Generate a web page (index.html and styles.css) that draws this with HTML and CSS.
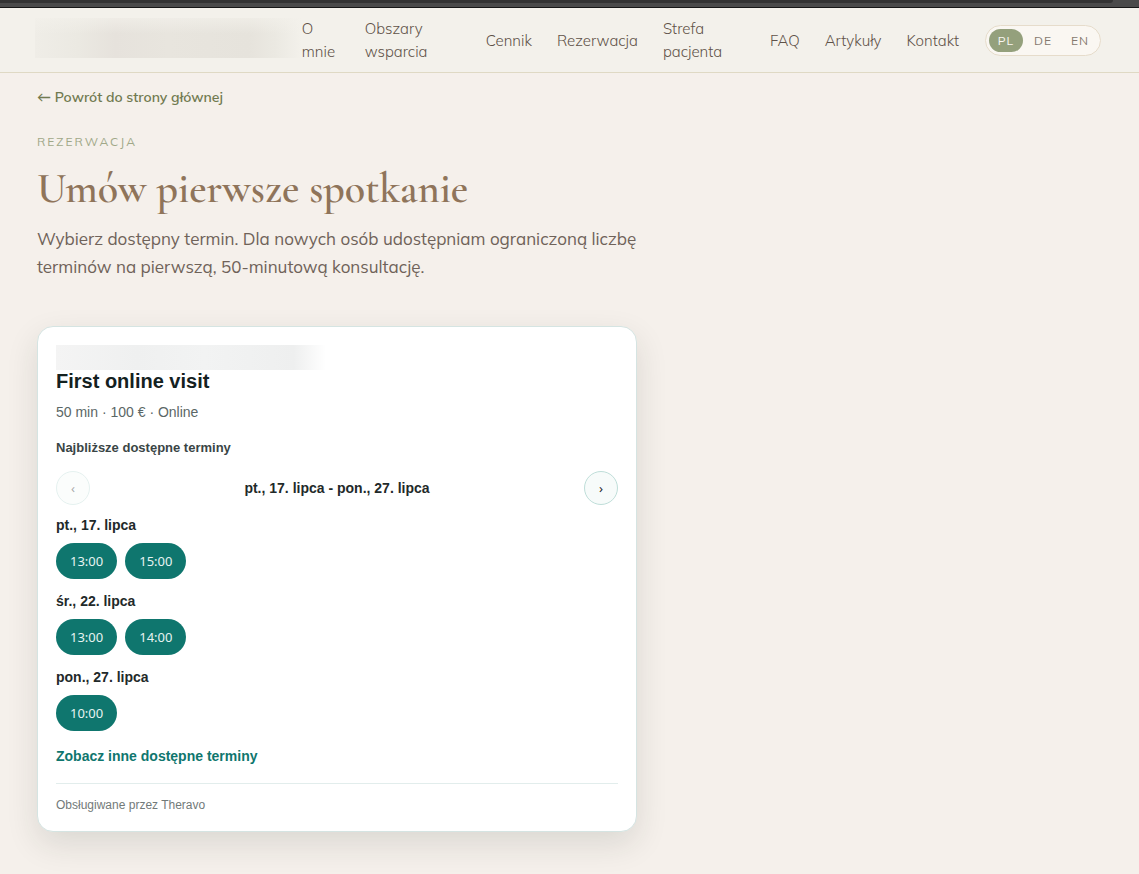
FILE: index.html
```html
<!DOCTYPE html>
<html lang="pl">
<head>
<meta charset="utf-8">
<meta name="viewport" content="width=device-width, initial-scale=1">
<title>Umów pierwsze spotkanie</title>
<link rel="stylesheet" href="styles.css">
</head>
<body>
<div class="window-edge"><div class="window-field"></div></div>
<header class="site-header">
  <div class="brand"><div class="brand-haze"></div></div>
  <nav class="nav">
    <a class="nav-about" href="#">O mnie</a>
    <a class="nav-areas" href="#">Obszary wsparcia</a>
    <a href="#">Cennik</a>
    <a href="#">Rezerwacja</a>
    <a class="nav-zone" href="#">Strefa pacjenta</a>
    <a href="#">FAQ</a>
    <a href="#">Artykuły</a>
    <a href="#">Kontakt</a>
  </nav>
  <div class="languages">
    <button class="language language-active" type="button">PL</button>
    <button class="language" type="button">DE</button>
    <button class="language" type="button">EN</button>
  </div>
</header>
<main class="page">
  <a class="back" href="#">← Powrót do strony głównej</a>
  <p class="eyebrow">Rezerwacja</p>
  <h1 class="title">Umów pierwsze spotkanie</h1>
  <p class="lead">Wybierz dostępny termin. Dla nowych osób udostępniam ograniczoną liczbę terminów na pierwszą, 50-minutową konsultację.</p>
  <section class="card">
    <div class="provider"></div>
    <h2 class="visit">First online visit</h2>
    <p class="meta">50 min · 100 € · Online</p>
    <p class="nearest">Najbliższe dostępne terminy</p>
    <div class="range">
      <button class="arrow" type="button" aria-label="Poprzednie terminy" disabled>‹</button>
      <strong class="range-label">pt., 17. lipca - pon., 27. lipca</strong>
      <button class="arrow" type="button" aria-label="Następne terminy">›</button>
    </div>
    <div class="days">
      <div class="day">
        <h3 class="date">pt., 17. lipca</h3>
        <div class="slots"><button class="slot" type="button">13:00</button><button class="slot" type="button">15:00</button></div>
      </div>
      <div class="day">
        <h3 class="date">śr., 22. lipca</h3>
        <div class="slots"><button class="slot" type="button">13:00</button><button class="slot" type="button">14:00</button></div>
      </div>
      <div class="day">
        <h3 class="date">pon., 27. lipca</h3>
        <div class="slots"><button class="slot" type="button">10:00</button></div>
      </div>
    </div>
    <a class="more" href="#">Zobacz inne dostępne terminy</a>
    <p class="powered">Obsługiwane przez Theravo</p>
  </section>
</main>
</body>
</html>
```

FILE: styles.css
```css
* { box-sizing: border-box; }

body {
  margin: 0;
  min-height: 100vh;
  background: #f5f0eb;
  color: #6f6259;
  font-family: Mulish, Muli, Nunito, Lato, "Open Sans", sans-serif;
}

h1, h2, h3, p { margin: 0; }
a { color: inherit; text-decoration: none; }
button { font-family: inherit; cursor: pointer; }

.window-edge {
  height: 8px;
  padding-right: 26px;
  background: #4a4a4a;
  border-bottom: 1px solid #171717;
}

.window-field {
  height: 3px;
  background: #333333;
  border-bottom-right-radius: 6px;
}

.site-header {
  display: flex;
  align-items: center;
  gap: 26px;
  min-height: 65px;
  padding: 8px 38px 8px 35px;
  background: #f3f1eb;
  border-bottom: 1px solid #dfd9c4;
}

.brand { flex: 1 1 0; }

.brand-haze {
  height: 40px;
  margin: -4px -26px 0 0;
  background: linear-gradient(#f3f1ebaa, #f3f1eb00 40%, #f3f1eb00), linear-gradient(90deg, #efede7, #ebe9e2 16%, #e6e2dc 30%, #e8e5de 50%, #e6e3dc 80%, #ebe9e2 90%, #f3f1eb);
}

.nav {
  display: flex;
  align-items: center;
  gap: 25px;
  color: #5f5248;
  font-size: 15px;
  font-weight: 300;
  line-height: 23px;
}

.nav-about { width: 38px; }
.nav-areas { width: 96px; }
.nav-zone { width: 82px; }

.languages {
  display: flex;
  gap: 3px;
  padding: 3px;
  background: #faf7f2;
  border: 1px solid #e6dccb;
  border-radius: 999px;
}

.language {
  width: 34px;
  height: 23px;
  padding: 0;
  border: 0;
  border-radius: 999px;
  background: transparent;
  color: #85796f;
  font-size: 12px;
  letter-spacing: 1px;
}

.language-active { background: #94a07c; color: #faf7f2; }

.page {
  max-width: 674px;
  padding: 13px 37px 42px;
}

.back {
  display: block;
  color: #717a50;
  font-size: 14px;
  font-weight: 600;
  line-height: 22px;
}

.eyebrow {
  margin-top: 24px;
  color: #a0a888;
  font-size: 12px;
  letter-spacing: 2px;
  line-height: 20px;
  text-transform: uppercase;
}

.title {
  margin-top: 11px;
  color: #8f745a;
  font-family: "Cormorant Garamond", "Liberation Serif", serif;
  font-size: 42px;
  font-weight: 600;
  line-height: 52px;
}

.lead {
  margin-top: 10px;
  font-size: 17px;
  line-height: 28px;
}

.card {
  margin-top: 45px;
  padding: 18px 18px 17px;
  background: #ffffff;
  border: 1px solid #d5e4e2;
  border-radius: 16px;
  box-shadow: 0 12px 32px rgba(30, 45, 30, 0.12);
  color: #1f2a2a;
  font-family: "Liberation Sans", Arial, sans-serif;
}

.provider {
  width: 270px;
  height: 25px;
  background: linear-gradient(90deg, #f4f4f4, #eff0f0 30%, #f2f3f3 55%, #eeefef 88%, #ffffff);
}

.visit {
  color: #14211f;
  font-size: 20px;
  line-height: 22px;
}

.meta {
  margin-top: 10px;
  color: #5b6766;
  font-size: 14px;
  line-height: 20px;
}

.nearest {
  margin-top: 17px;
  color: #3a4545;
  font-size: 13px;
  font-weight: 700;
  line-height: 18px;
}

.range {
  display: flex;
  align-items: center;
  justify-content: space-between;
  margin-top: 14px;
}

.range-label { font-size: 14px; }

.arrow {
  width: 34px;
  height: 34px;
  padding: 0;
  background: #f7fbfa;
  border: 1px solid #bfded9;
  border-radius: 50%;
  color: #1f2a2a;
  font-family: "Noto Sans", sans-serif;
  font-size: 13px;
}

.arrow:disabled { opacity: 0.4; cursor: default; }

.days {
  display: grid;
  gap: 13px;
  margin-top: 11px;
}

.date {
  font-size: 14px;
  line-height: 18px;
}

.slots {
  display: flex;
  flex-wrap: wrap;
  gap: 8px;
  margin-top: 9px;
}

.slot {
  height: 36px;
  padding: 0 14px;
  background: #0f766e;
  border: 0;
  border-radius: 999px;
  color: #e6f3f1;
  font-family: "Noto Sans", sans-serif;
  font-size: 13px;
}

.more {
  display: block;
  margin-top: 15px;
  color: #0f766e;
  font-size: 14px;
  font-weight: 700;
  line-height: 20px;
}

.powered {
  margin-top: 17px;
  padding-top: 12px;
  border-top: 1px solid #e2edec;
  color: #727a79;
  font-size: 12px;
  line-height: 18px;
}
```
